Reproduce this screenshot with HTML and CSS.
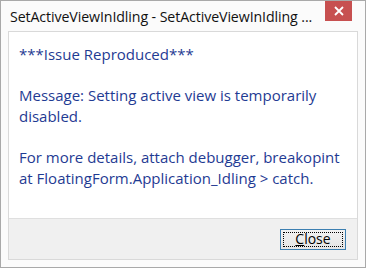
FILE: index.html
```html
<!DOCTYPE html>
<html>
<head>
<meta charset="utf-8">
<link rel="stylesheet" href="styles.css">
</head>
<body>
<div class="window">
  <div class="titlebar">
    <div class="title">SetActiveViewInIdling - SetActiveViewInIdling ...</div>
    <div class="close-x">
      <svg width="10" height="10" viewBox="0 0 10 10"><path d="M1 1 L9 9 M9 1 L1 9" stroke="#fff" stroke-width="1.8"/></svg>
    </div>
  </div>
  <div class="client">
    <div class="content">
      <p>***Issue Reproduced***</p>
      <p>&nbsp;</p>
      <p>Message: Setting active view is temporarily disabled.</p>
      <p>&nbsp;</p>
      <p>For more details, attach debugger, breakopint at FloatingForm.Application_Idling &gt; catch.</p>
    </div>
    <div class="footer">
      <button class="btn"><span class="focus"><u>C</u>lose</span></button>
    </div>
  </div>
</div>
</body>
</html>
```
FILE: styles.css
```css
html, body { margin: 0; padding: 0; }
body { width: 366px; height: 268px; overflow: hidden; background: #fff; font-family: "Open Sans", "Noto Sans", sans-serif; }
.window {
  box-sizing: border-box;
  width: 366px; height: 268px;
  border: 1px solid #a9a9a9;
  background: #fbfbfb;
  display: flex; flex-direction: column;
  padding: 0 7px 7px 7px;
}
.titlebar {
  height: 30px;
  display: flex; align-items: flex-start; justify-content: space-between;
}
.title {
  font-size: 14.2px; color: #111;
  padding: 6px 0 0 2px;
  white-space: nowrap; letter-spacing: -0.1px;
}
.close-x {
  width: 27px; height: 20px; margin-right: 6px;
  background: #c75050;
  display: flex; align-items: center; justify-content: center;
}
.client {
  flex: 1;
  border: 1px solid #d9d9d9;
  background: #fff;
  display: flex; flex-direction: column;
}
.content {
  flex: 1;
  padding: 12px 10px 0 10px;
  color: #1f3b93;
  font-size: 15px;
  line-height: 20.6px;
}
.content p { margin: 0; }
.footer {
  height: 40px;
  background: #f0f0f0;
  border-top: 1px solid #dfdfdf;
  display: flex; align-items: center; justify-content: flex-end;
  padding-right: 11px;
}
.btn {
  width: 66px; height: 21px;
  border: 1px solid #3c7fb1;
  background: linear-gradient(#f2f2f2, #e5e5e5);
  padding: 2px;
  font-family: inherit; font-size: 14px; color: #000;
  display: flex;
}
.focus {
  flex: 1;
  border: 1px dotted #000;
  display: flex; align-items: center; justify-content: center;
  line-height: 1;
}
```
